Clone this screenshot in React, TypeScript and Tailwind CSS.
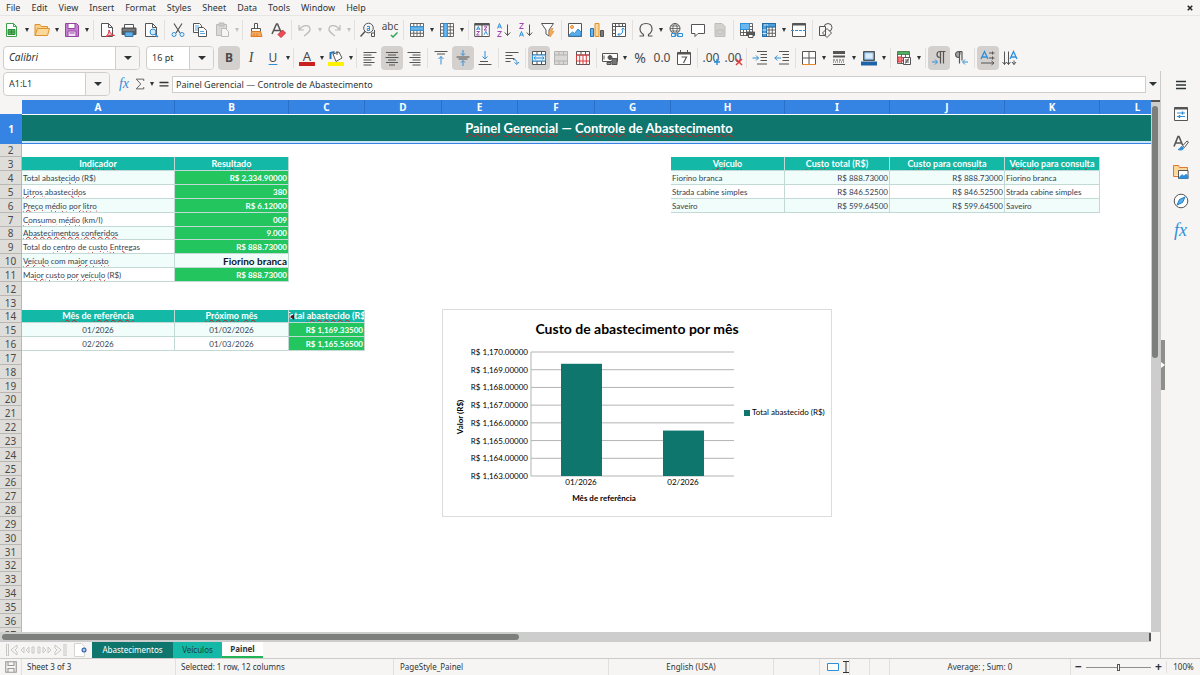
import { ReactNode, useState } from "react";
import clsx from "clsx";

const DARK = "#555555";
const BLUE = "#2f8fd8";

/* ---------- icons ---------- */

interface IconProps {
  children: ReactNode,
  size?: string
}

const Icon: React.FC<IconProps> = ({ children, size = "size-4" }) => (
  <svg className={clsx(size, "shrink-0")} viewBox="0 0 16 16" fill="none" stroke={DARK} strokeWidth="1" aria-hidden="true">
    {children}
  </svg>
)

const Caret: React.FC<{ muted?: boolean, big?: boolean }> = ({ muted, big }) => (
  <svg className={big ? "w-2 h-1" : "w-1 h-1"} viewBox="0 0 8 5" preserveAspectRatio="none" fill={muted ? "#c4c2c0" : "#2e3436"} aria-hidden="true">
    <path d="M0 0h8L4 5z" />
  </svg>
)

const grid = (x: number, y: number, w: number, h: number, cols: number, rows: number) => {
  let d = `M${x} ${y}h${w}v${h}h${-w}z`;
  for (let i = 1; i < cols; i++) d += `M${x + (w * i) / cols} ${y}v${h}`;
  for (let i = 1; i < rows; i++) d += `M${x} ${y + (h * i) / rows}h${w}`;
  return d;
}

const page = "M2.5 1.5h7l4 4v9h-11z M9.5 1.5v4h4";

const icons: Record<string, ReactNode> = {
  new: <><path d="M2.5 1.5h7l3 3v10h-10z M9.5 1.5v3h3" fill="#fff" stroke="#3fa14c" /><path d="M4 7.5h7v5h-7z M4 10h7 M7.5 7.5v5" fill="#56b45f" stroke="#2f8a3d" /></>,
  open: <><path d="M1 13.5V2.5h5l1.5 2h6v2" fill="#f7cf86" stroke="#e0912f" /><path d="M1 13.5l2.5-7h12l-2 7z" fill="#fbd79a" stroke="#e0912f" /></>,
  save: <><path d="M1.5 1.5h11l2 2v11h-13z" fill="#c77fd2" stroke="#94469f" /><path d="M4 1.5h7v5H4z" fill="#fff" stroke="#94469f" /><path d="M4 9h8v5.5H4z" fill="#f3dff5" stroke="#94469f" /><path d="M5.5 11h5" stroke="#94469f" /></>,
  pdf: <><path d={page} fill="#fff" /><path d="M7 14.5c2-1.5 3-4 3-6.5 1 3 2.5 5 5.5 5.5-3-.5-6 0-8.5 1z" stroke="#d92f3f" fill="#f6c7cb" /></>,
  print: <><path d="M3.5 6V2.5h9V6" fill="#fff" /><path d="M1 6h14v6.5H1z" fill="#5a5a5a" /><path d="M4 10h8v4.5H4z" fill="#5fb0ec" stroke="#3a6f9a" /><path d="M2 8h12" stroke="#999" /></>,
  preview: <><path d={page} fill="#fff" /><circle cx="10" cy="10" r="3" fill="#cfe7fa" stroke={BLUE} /><path d="M12 12l3 3" stroke={BLUE} strokeWidth="1.5" /></>,
  cut: <><path d="M4 1.5l6 9.5 M12 1.5L6 11" strokeWidth="1.2" /><circle cx="4" cy="12.5" r="2" stroke={BLUE} /><circle cx="12" cy="12.5" r="2" stroke={BLUE} /></>,
  copy: <><path d="M1.5 1.5h6l2 2v7h-8z" fill="#fff" /><path d="M6.5 5.5h5l3 3v6h-8z" fill="#fff" /><path d="M3 4h4 M3 6h3 M3 8h3 M8 9.5h4 M8 11.5h5" stroke={BLUE} strokeWidth=".8" /></>,
  paste: <g stroke="#bdbbb8"><path d="M2.5 2.5h10v11h-10z" fill="#dad8d6" /><path d="M5 1h5v3H5z" fill="#cfcdca" /><path d="M7.5 6.5h4l3 3v5h-7z" fill="#f6f5f4" /></g>,
  brush: <><path d="M6.5 1.5h3v5h-3z" fill="#fff" /><path d="M3.5 6.5h9v3h-9z" fill="#fff" /><path d="M3.5 9.5h9l1.5 5H3z" fill="#f5a95c" stroke="#df7b23" /><path d="M6 11.5v3 M9 11.5v3" stroke="#df7b23" /></>,
  clear: <><path d="M2 12L6.5 2h1L11 10 M4 8.5h6" strokeWidth="1.5" /><path d="M8 12.5l4.5-4.5 3 3L11 15.5z" fill="#ee4b56" stroke="#c92f3a" /></>,
  undo: <path d="M2 3v5h5 M2.5 8C5 3 12 2 13 6.5c.5 3-2 4.5-6 7.5" stroke="#bdbbb8" strokeWidth="1.2" />,
  redo: <path d="M14 3v5H9 M13.5 8C11 3 4 2 3 6.5c-.5 3 2 4.5 6 7.5" stroke="#bdbbb8" strokeWidth="1.2" />,
  find: <><circle cx="8.5" cy="6" r="4.8" /><path d="M5 9.5l-4.5 5" strokeWidth="1.5" /><path d="M7 4.5h2.5v4H7.3v-2h2.2" stroke={BLUE} /><path d="M14.5 8v6.5h-3v-3.5h3" /></>,
  rows: <><path d={grid(1.5, 1.5, 13, 13, 4, 4)} strokeWidth=".9" fill="#fff" /><path d="M1.5 4.8h13v3.5h-13z" fill="#6bb6ee" stroke={BLUE} /></>,
  cols: <><path d={grid(1.5, 1.5, 13, 13, 4, 4)} strokeWidth=".9" fill="#fff" /><path d="M4.8 1.5h3.5v13H4.8z" fill="#6bb6ee" stroke={BLUE} /></>,
  sort: <><path d="M.7 1.5h14.6v13H.7z M8 1.5v13" fill="#fff" /><path d="M.7 2.5h14.6" strokeWidth="2" /><path d="M2.5 8L4.3 4.5 6 8 M3 7h2.5 M10 12.8l1.8-3.5 1.7 3.5" stroke={BLUE} /><path d="M2.5 9.5h3L2.5 13h3 M10 4.8h3L10 8h3" stroke="#a443b5" /></>,
  az: <><path d="M1.5 6.5L3.5 1.5l2 5 M2 5h3" stroke={BLUE} /><path d="M1.5 9.5h4l-4 5h4" stroke="#a443b5" /><path d="M11.5 2.5v11 M8.8 10.5l2.7 3 2.7-3" /></>,
  za: <><path d="M1.5 1.5h4l-4 5h4" stroke="#a443b5" /><path d="M1.5 14.5l2-5 2 5 M2 13h3" stroke={BLUE} /><path d="M11.5 2.5v11 M8.8 10.5l2.7 3 2.7-3" /></>,
  filter: <><path d="M1.5 1.5h12L9 8v6l-3-2V8z" fill="#fff" /><path d="M11.5 6.5L8.5 11h2.5l-1 4 4-5.5h-2.5l1.5-3z" fill="#f9b25c" stroke="#e58a2a" strokeWidth=".7" /></>,
  image: <><path d="M1.5 1.5h13v13h-13z" fill="#fff" /><circle cx="5" cy="5" r="1.5" fill="#f9c98c" stroke="#e58a2a" /><path d="M2 13l3.5-3 2 1.5L11 7l3 3v4H2z" fill="#5aaeea" stroke={BLUE} /></>,
  chart: <><path d="M1.5 6.5h3v8h-3z" fill="#6bb6ee" stroke="#2475b5" /><path d="M6 1.5h4v13H6z" fill="#fbd79a" stroke="#e0912f" /><path d="M11.5 8.5h3v6h-3z" fill="#7a7a7a" /></>,
  pivot: <><path d="M1.5 1.5h13v13h-13z M1.5 4.5h13 M4.5 1.5v13 M8 1.5v3 M11.5 1.5v3 M1.5 8h3 M1.5 11.5h3" fill="#fff" /><path d="M12 6l-.5 4c-.5 2-2 2.5-4.5 2.5 M10.5 7.5L12 6l1.5 1.5 M8.5 11L7 12.5l1.5 1.5" stroke={BLUE} /></>,
  omega: <path d="M1.5 14h4v-1.5C3 11 2 9 2 7c0-3.5 2.5-5.5 6-5.5s6 2 6 5.5c0 2-1 4-3.5 5.5V14h4" strokeWidth="1.2" />,
  link: <><circle cx="7" cy="6.5" r="5" /><path d="M2 6.5h10 M7 1.5c-3 3-3 7 0 10 M7 1.5c3 3 3 7 0 10 M3 4h8 M3 9h8" strokeWidth=".8" /><path d="M3.5 11.5h4v3h-4z M9.5 11.5h5v3h-5z M6 13h5" stroke={BLUE} fill="#e9f4fc" /></>,
  comment: <path d="M1.5 2.5h13v9H8L5 14.5v-3H1.5z" fill="#fff" />,
  headfoot: <path d="M3 1.5h7l3 3v10H3z M5 8h6v4H5z" fill="#d3d1ce" stroke="#bfbdba" />,
  printarea: <><path d={grid(1.5, 1.5, 12, 12, 4, 4)} strokeWidth=".9" fill="#fff" /><path d="M1.5 1.5h9v6h-9z" fill="#6bb6ee" stroke={BLUE} /><path d="M8 10h7.5v3.5H8z" fill="#5a5a5a" /><path d="M9.5 12.5h4.5v3H9.5z" fill="#fff" /></>,
  freeze: <><path d={grid(1.5, 1.5, 13, 13, 4, 4)} strokeWidth=".9" fill="#fff" /><path d="M1.5 1.5h4v13h-4z M5.5 1.5h9v3.5h-9z" fill="#4b9fdc" stroke="#1f6ba8" /><path d="M1.5 8h4 M1.5 11.5h4 M3 3h4" stroke="#fff" strokeWidth=".8" /></>,
  split: <><path d="M1.5 1.5h13v13h-13z" fill="#fff" /><path d="M1.5 2.5h13" strokeWidth="2" /><path d="M0 8.5h16" stroke={BLUE} strokeDasharray="3 1" /></>,
  shapes: <><circle cx="10" cy="5.5" r="4" /><path d="M1.5 4.5h6v9h-6z M9 6.5l4.5 4.5L9 15.5 4.5 11z" fill="#f6f5f4" /></>,
  left: <path d="M1.5 2.5h13 M1.5 5h8 M1.5 7.5h11 M1.5 10h8 M1.5 12.5h11 M1.5 15h8" />,
  center: <path d="M2 2.5h12 M4 5h8 M1.5 7.5h13 M4 10h8 M2 12.5h12 M5 15h6" />,
  right: <path d="M1.5 2.5h13 M6.5 5h8 M3.5 7.5h11 M6.5 10h8 M3.5 12.5h11 M6.5 15h8" />,
  top: <><path d="M1.5 1.5h13 M4 4h8" /><path d="M8 14.5V6.5 M5.5 9L8 6.5 10.5 9" stroke={BLUE} /></>,
  middle: <><path d="M1.5 7h13 M3.5 9h9" /><path d="M8 0v5 M6 3.5L8 5.5l2-2 M8 16v-5 M6 12.5l2-2 2 2" stroke={BLUE} /></>,
  bottom: <><path d="M1.5 14.5h13 M3 11.5h8" /><path d="M8 1v8 M5.5 6.5L8 9l2.5-2.5" stroke={BLUE} /></>,
  wrap: <><path d="M1.5 2.5h13 M1.5 5.5h7 M1.5 8.5h9 M1.5 11.5h5" /><path d="M9 9.5c3 0 4 1 4 4 M10.5 12.5l2.5 2 2-2.5" stroke={BLUE} /></>,
  merge: <><path d="M1.5 1.5h13v13h-13z M1.5 5h13 M1.5 11h13 M6 1.5V5 M10.5 1.5V5 M6 11v3.5 M10.5 11v3.5" fill="#fff" /><path d="M1.5 5h13v6h-13z M4 8h8" stroke={BLUE} fill="#dff0fc" /><path d="M4.5 6.5L3 8l1.5 1.5 M11.5 6.5L13 8l-1.5 1.5" stroke={BLUE} /></>,
  mergeOff: <path d="M1.5 1.5h13v13h-13z M1.5 5h13 M1.5 11h13 M6 1.5V5 M10.5 1.5V5 M6 11v3.5 M10.5 11v3.5" fill="#dad8d6" stroke="#b5b3b0" />,
  unmerge: <><path d="M1.5 1.5h13v13h-13z M1.5 5h13 M6 1.5V5 M10.5 1.5V5" fill="#fff" /><path d="M1.5 5h13v6h-13z M4.7 5v9.5 M8 5v9.5 M11.3 5v9.5" stroke="#d93a3a" /></>,
  currency: <><path d="M.5 3.5h15v8H.5z" fill="#fff" /><circle cx="8" cy="7.5" r="2" fill={DARK} /><path d="M2 5.5v4" /><path d="M10 8.5h5v6h-5z" fill="#777" /><path d="M5 12.5h4v2H5z" fill="#999" /></>,
  date: <><path d="M1.5 2.5h13v12h-13z" fill="#fff" /><path d="M1.5 3.5h13" strokeWidth="2" /><path d="M4.5 0v2 M11.5 0v2" /><path d="M5.5 7h5L7.5 13" strokeWidth="1.2" /></>,
  indent: <><path d="M5 1.5h10 M8.5 4.5h6.5 M8.5 7.5h6.5 M8.5 10.5h6.5 M5 14h10" /><path d="M.5 8h6 M4 5.5L6.5 8 4 10.5" stroke={BLUE} /></>,
  outdent: <><path d="M5 1.5h10 M8.5 4.5h6.5 M8.5 7.5h6.5 M8.5 10.5h6.5 M5 14h10" /><path d="M7 8H.8 M3.3 5.5L.8 8l2.5 2.5" stroke={BLUE} /></>,
  borders: <><path d="M1.5 14.5v-13h13v13 M8 1.5v13 M1.5 8h13" fill="#fff" /><path d="M1 14.5h14" stroke="#e58a2a" /></>,
  borderStyle: <><path d="M2 2.5h12" strokeWidth="3" /><path d="M2 6.5h12" strokeWidth="2" /><path d="M2 10h12" strokeDasharray="2 1" /><path d="M2 12h12" strokeDasharray="1 1" /><path d="M2 14.5h12" /></>,
  borderColor: <><path d="M2.5 1.5h11v9h-11z" fill="#5a7d9a" /><path d="M4 3h8v6H4z" fill="#dcebf8" stroke="#9cc9ec" /><path d="M0 13.5h16" stroke="#1d63a8" strokeWidth="4" /></>,
  conditional: <><path d={grid(1.5, 1.5, 12, 12, 3, 4)} fill="#fff" strokeWidth=".9" /><path d="M2 2h11v2H2z" fill="#62bd6d" stroke="#3fa14c" /><path d="M2 7h4v5H2z" fill="#f27d82" stroke="#d93a3a" /><path d="M7.5 7.5h7v7h-7z M9 10h4 M9 12h4 M12.5 8.5l-3 5" fill="#fff" /></>,
  ltr: <><path d="M14.5 1.5H9c-4 0-4 6 0 6 M9.5 1.5v12 M12.5 1.5v12" strokeWidth="1.2" /><path d="M1 12h5 M4 9.5L6.5 12 4 14.5" stroke={BLUE} /></>,
  rtl: <><path d="M9 1.5H6c-4.5 0-4.5 6 0 6 M6.5 1.5v12 M9 1.5v9" fill="#a9a7a5" strokeWidth="1.2" /><path d="M15 12h-5 M12 9.5L9.5 12l2.5 2.5" stroke={BLUE} /></>,
  horizText: <><path d="M1 9L4.5 1.5 8 9 M2 7h5" stroke={BLUE} strokeWidth="1.3" /><path d="M9 3h5.5 M12.5 1.5v3 M9 8h5.5 M12.5 6.5v3 M1 13h13 M11.5 11l2.5 2-2.5 2" /></>,
  vertText: <><path d="M8 9l3.5-7.5L15 9 M9 7h5" stroke={BLUE} strokeWidth="1.3" /><path d="M2.5 1.5v13 M.5 12l2 2.5 2-2.5 M6.5 1.5v13 M4.5 12l2 2.5 2-2.5 M12 10.5v4 M10 12l2 2.5 2-2.5" /></>,
  properties: <><path d="M1.5 1.5h13v13h-13z" fill="#fff" /><path d="M1.5 2.5h13" strokeWidth="2" /><path d="M4 7h8 M4 10.5h8" stroke={BLUE} /><path d="M9.5 5.5v3 M6.5 9v3" stroke={BLUE} strokeWidth="1.5" /></>,
  styles: <><path d="M1 11.5L5 1.5h1L9.5 10 M3 8h5" strokeWidth="1.6" /><path d="M9.5 11L14 6l1.5 1-4 5.5z" fill="#fff" /><path d="M5 14.5c2 0 2-2.5 4-3l1.5 1.5c0 2-3 2.5-5.5 1.5z" fill={BLUE} stroke={BLUE} /></>,
  gallery: <><path d="M.5 12.5v-11h5l1 2h8v3" fill="#fbd79a" stroke="#e0782f" /><path d="M.5 12.5h5v-6h9" stroke="#e0782f" /><path d="M5.5 6.5h9.5v8H5.5z" fill="#fff" /><path d="M6 13.5l3-3 2 1.5 2-2 2 2v2.5H6z" fill={BLUE} stroke={BLUE} strokeWidth=".6" /></>,
  navigator: <><circle cx="8" cy="8" r="6.8" fill="#fff" /><path d="M12 4L9.5 9.5 4 12l2.5-5.5z" fill="#5aaeea" stroke="#1f7cc4" /></>,
  burger: <path d="M3 4.5h10 M3 8h10 M3 11.5h10" stroke="#2e3436" strokeWidth="1.5" />,
  sigma: <path d="M13 4V1.5H3L9 8l-6 6.5h10V12" strokeWidth="1.2" />,
  equals: <path d="M2 6h12 M2 10.5h12" stroke="#333" strokeWidth="1.8" />,
  close: <path d="M5 5l6 6 M11 5l-6 6" stroke="#222" strokeWidth="2" />,
}

const textIcons: Record<string, ReactNode> = {
  spell: (
    <span className="relative h-5 font-['Noto_Sans'] text-[10px] leading-3">
      abc
      <svg className="absolute top-3 right-0 w-2 h-1.5" viewBox="0 0 8 6" fill="none" stroke="#2fa85f" strokeWidth="1.5"><path d="M1 3l2 2 4.5-4.5" /></svg>
    </span>
  ),
  bold: <span className="font-['Noto_Sans'] font-bold text-xs">B</span>,
  italic: <span className="font-['Liberation_Serif'] italic text-sm">I</span>,
  underline: <span className="font-['Noto_Sans'] text-xs underline decoration-[#2f8fd8] underline-offset-2">U</span>,
  fontColor: <span className="font-['Noto_Sans'] text-[13px] leading-3 border-b-4 border-[#c9211e] w-4 text-center">A</span>,
  fill: (
    <svg className="size-4" viewBox="0 0 16 16" fill="none" stroke={DARK} aria-hidden="true">
      <path d="M5 4l6-2 3 6-6 3.5z" fill="#fff" /><path d="M9 1v4" /><path d="M2.5 9V3l4-1" stroke="#2475b5" strokeWidth="2" /><path d="M0 14h16" stroke="#fff200" strokeWidth="4" />
    </svg>
  ),
  percent: <span className="font-['Noto_Sans'] text-sm">%</span>,
  number: <span className="font-['Noto_Sans'] text-xs">0.0</span>,
  addDec: (
    <span className="relative font-['Noto_Sans'] text-xs">.00
      <svg className="absolute bottom-0 -right-0.5 size-2" viewBox="0 0 8 8" stroke={BLUE} strokeWidth="1.5"><path d="M4 1v6 M1 4h6" /></svg>
    </span>
  ),
  delDec: (
    <span className="relative font-['Noto_Sans'] text-xs">.00
      <svg className="absolute bottom-0 -right-0.5 size-2" viewBox="0 0 8 8" stroke="#e03b3b" strokeWidth="1.5"><path d="M1 1l6 6 M7 1l-6 6" /></svg>
    </span>
  ),
}

/* ---------- toolbars ---------- */

interface ToolItem {
  id: string,
  label: string,
  menu?: boolean,
  active?: boolean,
  disabled?: boolean
}

const standardGroups: ToolItem[][] = [
  [{ id: "new", label: "New", menu: true }, { id: "open", label: "Open", menu: true }, { id: "save", label: "Save", menu: true }],
  [{ id: "pdf", label: "Export as PDF" }, { id: "print", label: "Print" }, { id: "preview", label: "Print Preview" }],
  [{ id: "cut", label: "Cut" }, { id: "copy", label: "Copy" }, { id: "paste", label: "Paste", menu: true, disabled: true }],
  [{ id: "brush", label: "Clone Formatting" }, { id: "clear", label: "Clear Formatting" }],
  [{ id: "undo", label: "Undo", menu: true, disabled: true }, { id: "redo", label: "Redo", menu: true, disabled: true }],
  [{ id: "find", label: "Find and Replace" }, { id: "spell", label: "Spelling" }],
  [{ id: "rows", label: "Row", menu: true }, { id: "cols", label: "Column", menu: true }],
  [{ id: "sort", label: "Sort" }, { id: "az", label: "Sort Ascending" }, { id: "za", label: "Sort Descending" }, { id: "filter", label: "AutoFilter" }],
  [{ id: "image", label: "Insert Image" }, { id: "chart", label: "Insert Chart" }, { id: "pivot", label: "Pivot Table" }],
  [{ id: "omega", label: "Special Character", menu: true }, { id: "link", label: "Hyperlink" }, { id: "comment", label: "Comment" }, { id: "headfoot", label: "Headers and Footers", disabled: true }],
  [{ id: "printarea", label: "Define Print Area" }, { id: "freeze", label: "Freeze Rows and Columns", menu: true }, { id: "split", label: "Split Window" }],
  [{ id: "shapes", label: "Show Draw Functions" }],
]

const charGroups: ToolItem[][] = [
  [{ id: "bold", label: "Bold", active: true }, { id: "italic", label: "Italic" }, { id: "underline", label: "Underline", menu: true }],
  [{ id: "fontColor", label: "Font Color", menu: true }, { id: "fill", label: "Background Color", menu: true }],
]

const cellGroups: ToolItem[][] = [
  [{ id: "left", label: "Align Left" }, { id: "center", label: "Center Horizontally", active: true }, { id: "right", label: "Align Right" }],
  [{ id: "top", label: "Align Top" }, { id: "middle", label: "Center Vertically", active: true }, { id: "bottom", label: "Align Bottom" }],
  [{ id: "wrap", label: "Wrap Text" }],
  [{ id: "merge", label: "Merge and Center Cells", active: true }, { id: "mergeOff", label: "Merge Cells", disabled: true }, { id: "unmerge", label: "Unmerge Cells" }],
  [{ id: "currency", label: "Format as Currency", menu: true }, { id: "percent", label: "Format as Percent" }, { id: "number", label: "Format as Number" }, { id: "date", label: "Format as Date" }],
  [{ id: "addDec", label: "Add Decimal Place" }, { id: "delDec", label: "Delete Decimal Place" }],
  [{ id: "indent", label: "Increase Indent" }, { id: "outdent", label: "Decrease Indent" }],
  [{ id: "borders", label: "Borders", menu: true }, { id: "borderStyle", label: "Border Style", menu: true }, { id: "borderColor", label: "Border Color", menu: true }],
  [{ id: "conditional", label: "Conditional Formatting", menu: true }],
  [{ id: "ltr", label: "Left-To-Right", active: true }, { id: "rtl", label: "Right-To-Left" }],
  [{ id: "horizText", label: "Text direction from left to right", active: true }, { id: "vertText", label: "Text direction from top to bottom" }],
]

const Separator = () => <div className="w-px h-5 mx-0.5 shrink-0 bg-[#e2e0de]" />

const ToolGroups: React.FC<{ groups: ToolItem[][], compact?: boolean }> = ({ groups, compact }) => (
  <>
    {groups.map((group, i) => (
      <div key={i} className="flex items-center shrink-0">
        {i > 0 && <Separator />}
        {group.map((item) => (
          <div key={item.id} className="flex items-center">
            <button
              type="button"
              title={item.label}
              aria-label={item.label}
              disabled={item.disabled}
              className={clsx("flex items-center justify-center w-[22px] h-6 rounded text-[#4a4a4a]", item.active && "bg-[#d3d0cd]")}
            >
              {textIcons[item.id] ?? <Icon>{icons[item.id]}</Icon>}
            </button>
            {item.menu && (
              <button type="button" aria-label={item.label + " options"} className={clsx("flex items-center justify-center h-6", compact || item.disabled ? "w-[7px]" : "w-2")}>
                <Caret muted={item.disabled} />
              </button>
            )}
          </div>
        ))}
      </div>
    ))}
  </>
)

interface ComboProps {
  label: string,
  value: string,
  className: string,
  inputClass?: string
}

const Combo: React.FC<ComboProps> = ({ label, value, className, inputClass }) => {
  const [text, setText] = useState(value);
  return (
    <div className={clsx("flex h-6 shrink-0 border border-[#d0cdca] rounded bg-white overflow-hidden", className)}>
      <input aria-label={label} value={text} onChange={(e) => setText(e.target.value)} className={clsx("flex-1 min-w-0 px-[5px] outline-none text-[#2e3436]", inputClass)} />
      <button type="button" aria-label={label + " list"} className="flex items-center justify-center w-6 border-l border-[#d0cdca] bg-[#f6f5f4]">
        <Caret big />
      </button>
    </div>
  )
}

/* ---------- sheet ---------- */

type Kind = "head" | "text" | "center" | "value" | "plain" | "strong";

interface Cell {
  text: string,
  kind: Kind,
  tint?: boolean,
  cut?: boolean
}

const kindClass: Record<Kind, string> = {
  head: "bg-[#14b8a6] text-white font-bold text-center text-[9px]",
  text: "text-[#374151] text-left text-[8px]",
  center: "text-[#374151] text-center text-[8px]",
  value: "bg-[#22c55e] text-white font-bold text-right text-[8px]",
  plain: "text-[#374151] text-right text-[8px]",
  strong: "text-[#0f172a] font-bold text-right text-[10px]",
}

const columns = ["A", "B", "C", "D", "E", "F", "G", "H", "I", "J", "K", "L"];
const columnClass = ["w-[153px]", "w-[114px]", "w-[76px]", "w-[77px]", "w-[76px]", "w-[77px]", "w-[76px]", "w-[114px]", "w-[105px]", "w-[115px]", "w-[95px]", "w-[76px]"];

const cells: Record<string, Cell> = {
  C14: { text: "Total abastecido (R$)", kind: "head", cut: true },
}

const put = (row: number, names: string, kinds: Kind[], values: string[], tint = false) => {
  names.split("").forEach((name, i) => {
    cells[name + row] = { text: values[i], kind: kinds[i], tint };
  });
}

put(3, "AB", ["head", "head"], ["Indicador", "Resultado"]);
put(4, "AB", ["text", "value"], ["Total abastecido (R$)", "R$ 2,334.90000"], true);
put(5, "AB", ["text", "value"], ["Litros abastecidos", "380"]);
put(6, "AB", ["text", "value"], ["Preço médio por litro", "R$ 6.12000"], true);
put(7, "AB", ["text", "value"], ["Consumo médio (km/l)", "009"]);
put(8, "AB", ["text", "value"], ["Abastecimentos conferidos", "9.000"], true);
put(9, "AB", ["text", "value"], ["Total do centro de custo Entregas", "R$ 888.73000"]);
put(10, "AB", ["text", "strong"], ["Veículo com maior custo", "Fiorino branca"], true);
put(11, "AB", ["text", "value"], ["Maior custo por veículo (R$)", "R$ 888.73000"]);
put(14, "AB", ["head", "head"], ["Mês de referência", "Próximo mês"]);
put(15, "ABC", ["center", "center", "value"], ["01/2026", "01/02/2026", "R$ 1,169.33500"], true);
put(16, "ABC", ["center", "center", "value"], ["02/2026", "01/03/2026", "R$ 1,165.56500"]);
put(3, "HIJK", ["head", "head", "head", "head"], ["Veículo", "Custo total (R$)", "Custo para consulta", "Veículo para consulta"]);
put(4, "HIJK", ["text", "plain", "plain", "text"], ["Fiorino branca", "R$ 888.73000", "R$ 888.73000", "Fiorino branca"], true);
put(5, "HIJK", ["text", "plain", "plain", "text"], ["Strada cabine simples", "R$ 846.52500", "R$ 846.52500", "Strada cabine simples"]);
put(6, "HIJK", ["text", "plain", "plain", "text"], ["Saveiro", "R$ 599.64500", "R$ 599.64500", "Saveiro"], true);

// words the spell checker accepts
const known = ["Total", "total", "com", "para", "Fiorino", "branca", "Strada", "cabine", "simples", "Saveiro"];

const Spelled: React.FC<{ text: string }> = ({ text }) => (
  <>
    {text.split(" ").map((word, i) => {
      const ok = known.includes(word) || !/^[A-Za-zÀ-ú]{3,}$/.test(word);
      return (
        <span key={i}>
          {i > 0 && " "}
          <span className={ok ? "" : "underline decoration-wavy decoration-[#d01f1f] decoration-1 underline-offset-0"}>{word}</span>
        </span>
      )
    })}
  </>
)

const SheetCell: React.FC<{ cell?: Cell }> = ({ cell }) => {
  if (!cell) return <td />;
  return (
    <td className={clsx("px-px py-0 border-r border-b border-[#c3d9d5] leading-3 whitespace-nowrap overflow-hidden", kindClass[cell.kind], cell.tint && cell.kind !== "value" && "bg-[#f0fdfa]")}>
      {cell.cut ? (
        <div className="relative flex justify-center h-3">
          <span><Spelled text={cell.text} /></span>
          <svg className="absolute left-0 top-1 w-1 h-1.5" viewBox="0 0 4 6" fill="#5b1020"><path d="M4 0v6L0 3z" /></svg>
        </div>
      ) : (
        <div className="h-3"><Spelled text={cell.text} /></div>
      )}
    </td>
  )
}

const rows = Array.from({ length: 36 }, (_, i) => i + 2);

const Sheet = () => (
  <table className="w-full min-w-[1176px] table-fixed border-separate border-spacing-0 font-[Lato,sans-serif]">
    <colgroup>
      <col className="w-[22px]" />
      {columnClass.map((c, i) => <col key={i} className={c} />)}
      <col />
    </colgroup>
    <thead>
      <tr className="h-[14px] font-['Noto_Sans'] text-[10px] leading-3 text-white">
        <td className="p-0 bg-[#f6f5f4]" />
        {columns.map((c) => <th key={c} scope="col" className="p-0 bg-[#3584e4] border-r border-[#2a6fc6] font-bold">{c}</th>)}
        <td className="p-0 bg-[#3584e4]" />
      </tr>
    </thead>
    <tbody>
      <tr className="h-[30px]">
        <th scope="row" className="p-0 bg-[#3584e4] text-white font-['Noto_Sans'] text-[10px] font-bold">1</th>
        <td colSpan={12} className="p-0 pb-0.5 bg-[#0f766e] text-white text-center font-bold text-[13px] leading-5 border-t border-t-white border-b border-b-[#3584e4] shadow-[inset_0_-2px_0_#c9e4f7]">
          <Spelled text="Painel Gerencial — Controle de Abastecimento" />
        </td>
        <td className="p-0" />
      </tr>
      {rows.map((row) => (
        <tr key={row} className={row % 6 === 2 ? "h-[13px]" : "h-[14px]"}>
          <th scope="row" className="p-0 bg-[#deddda] border-r border-b border-[#b9b7b4] font-['Noto_Sans'] text-[10px] leading-3 font-normal text-[#4a4a4a]">{row}</th>
          {columns.map((c) => <SheetCell key={c} cell={cells[c + row]} />)}
          <td />
        </tr>
      ))}
    </tbody>
  </table>
)

/* ---------- chart ---------- */

const months = [
  { label: "01/2026", total: 1169.335 },
  { label: "02/2026", total: 1165.565 },
]
const ticks = [1170, 1169, 1168, 1167, 1166, 1165, 1164, 1163];

const CostChart = () => {
  const yOf = (v: number) => 42 + ((1170 - v) / 7) * 124;
  return (
    <svg className="absolute left-[442px] top-[209px] w-[390px] h-[208px] bg-white border border-[#dcdcdc] font-[Lato,sans-serif]" viewBox="0 0 388 206" role="img" aria-label="Custo de abastecimento por mês">
      <text x="194" y="24" textAnchor="middle" fontSize="14" fontWeight="700">Custo de abastecimento por mês</text>
      {ticks.map((t) => (
        <g key={t}>
          <path d={`M88 ${yOf(t)}H291`} stroke="#b3b3b3" />
          <text x="85" y={yOf(t) + 3} textAnchor="end" fontSize="8">R$ {t.toLocaleString("en-US")}.00000</text>
        </g>
      ))}
      <path d="M88 42v124" stroke="#b3b3b3" />
      {months.map((m, i) => (
        <g key={m.label}>
          <rect x={118 + i * 102} y={yOf(m.total)} width="41" height={yOf(1163) - yOf(m.total)} fill="#0f766e" />
          <text x={138 + i * 102} y="175" textAnchor="middle" fontSize="8">{m.label}</text>
        </g>
      ))}
      <text x="161" y="191" textAnchor="middle" fontSize="8" fontWeight="700">Mês de referência</text>
      <text transform="translate(20 107) rotate(-90)" textAnchor="middle" fontSize="8" fontWeight="700">Valor (R$)</text>
      <rect x="301" y="100" width="6" height="6" fill="#0f766e" />
      <text x="309" y="105" fontSize="8">Total abastecido (R$)</text>
    </svg>
  )
}

/* ---------- page ---------- */

const menus = ["File", "Edit", "View", "Insert", "Format", "Styles", "Sheet", "Data", "Tools", "Window", "Help"];

const sideIcons = ["burger", "properties", "styles", "gallery", "navigator"];

const StatusField: React.FC<{ className: string, children?: ReactNode }> = ({ className, children }) => (
  <div className={clsx("flex items-center h-4 border-r border-[#e2e0de]", className)}>{children}</div>
)

const App = () => {
  const [formula, setFormula] = useState("Painel Gerencial — Controle de Abastecimento");
  const [zoom, setZoom] = useState(50);

  return (
    <div className="flex flex-col h-screen overflow-hidden bg-[#f6f5f4] text-[#2e3436] font-['Noto_Sans',sans-serif] text-[9px]">
      <nav className="flex items-center gap-px h-4 shrink-0 pl-px border-b border-[#e8e6e4]" aria-label="Main menu">
        {menus.map((m) => <button key={m} type="button" className="px-[5px]">{m}</button>)}
        <button type="button" aria-label="Close document" className="ml-auto mr-1"><Icon size="size-3">{icons.close}</Icon></button>
      </nav>

      <div className="flex items-center h-7 shrink-0 pl-px">
        <ToolGroups groups={standardGroups} />
      </div>
      <div className="flex items-center h-[27px] shrink-0 pl-[3px]">
        <Combo label="Font Name" value="Calibri" className="w-[137px]" inputClass="italic text-[10px]" />
        <Combo label="Font Size" value="16 pt" className="w-[68px] ml-1.5" />
        <div className="w-1 shrink-0" />
        <ToolGroups groups={charGroups} compact />
        <Separator />
        <ToolGroups groups={cellGroups} />
      </div>

      <div className="flex flex-1 min-h-0 border-b border-[#cdcbc8]">
        <div className="flex flex-col flex-1 min-w-0">
          <div className="flex items-center h-[29px] shrink-0 pl-[3px] pb-[3px]">
            <Combo label="Name Box" value="A1:L1" className="w-[107px]" />
            <button type="button" aria-label="Function Wizard" className="ml-2 w-3 font-['Liberation_Serif'] italic text-sm leading-4 text-[#2f8fd8]">fx</button>
            <button type="button" aria-label="Select Function" className="flex items-center gap-1 ml-1"><Icon size="size-3">{icons.sigma}</Icon><Caret /></button>
            <button type="button" aria-label="Formula" className="ml-1"><Icon size="size-3">{icons.equals}</Icon></button>
            <input aria-label="Formula input" value={formula} onChange={(e) => setFormula(e.target.value)} className="flex-1 min-w-0 h-[17px] ml-0.5 px-[3px] bg-white border border-[#d0cdca] outline-none" />
            <button type="button" aria-label="Expand Formula Bar" className="flex items-center justify-center w-[14px] h-4"><Caret big /></button>
          </div>

          <div className="flex flex-1 min-h-0">
            <div className="relative flex-1 min-w-0 bg-white overflow-hidden">
              <Sheet />
              <CostChart />
            </div>
            <div className="w-[9px] shrink-0 bg-[#cdcdcd] px-px pt-1 border-t-2 border-[#555]">
              <div className="w-1.5 h-[48%] rounded-full bg-[#7d7f7d]" />
            </div>
          </div>
          <div className="flex h-2.5 shrink-0">
            <div className="flex flex-1 items-center bg-[#cdcdcd] pl-0.5">
              <div className="w-[45%] h-1.5 rounded-full bg-[#7d7f7d]" />
              <div className="ml-auto w-0.5 h-2 bg-[#555]" />
            </div>
            <div className="w-[9px]" />
          </div>

          <div className="flex h-4 shrink-0 text-[8px]">
            <div className="flex items-center w-[92px] shrink-0 pl-1.5">
              <svg className="w-[61px] h-3 shrink-0" viewBox="0 0 61 12" fill="none" stroke="#c9c7c4" aria-hidden="true">
                <path d="M.5 0v12h2V0z M11 1L5 6l6 5V8L9 6l2-2z M18 3l-3 3 3 3z M23 3l-3 3 3 3z M26 3v6h2V3z M32 3v6h2V3z M37 3l3 3-3 3z M42 3l3 3-3 3z M49 1l6 5-6 5V8l2-2-2-2z M58 0v12h2V0z" />
              </svg>
              <button type="button" aria-label="Add Sheet" className="ml-1.5">
                <svg className="size-3.5" viewBox="0 0 14 14" fill="#fff" stroke="#d6d4d2"><path d="M1.5.5h7l3 3v10h-10z" /><circle cx="11" cy="7" r="2.5" fill="#2a5caa" stroke="none" /><path d="M11 5.5v3 M9.500 7h3" stroke="#fff" strokeWidth=".8" /></svg>
              </button>
            </div>
            <button type="button" className="w-[81px] bg-[#0f766e] text-white">Abastecimentos</button>
            <button type="button" className="w-[49px] bg-[#14b8a6] text-[#1c3f3b]">Veículos</button>
            <button type="button" className="w-[41px] bg-white font-bold border-b-2 border-[#22b455]">Painel</button>
          </div>
        </div>

        <aside className="flex w-10 shrink-0 border-l border-[#cdcbc8]">
          <div className="flex flex-col w-1 justify-center">
            <button type="button" aria-label="Hide sidebar" className="flex items-center h-[50px] bg-[#8e8e8c]">
              <svg className="w-1 h-1.5" viewBox="0 0 4 6" fill="#fff"><path d="M0 0l4 3-4 3z" /></svg>
            </button>
          </div>
          <div className="flex flex-col items-center flex-1 gap-[13px] pt-1.5 pr-1">
            {sideIcons.map((name) => (
              <button key={name} type="button" aria-label={name}><Icon>{icons[name]}</Icon></button>
            ))}
            <button type="button" aria-label="Functions" className="font-['Liberation_Serif'] italic text-lg leading-4 text-[#2f8fd8]">fx</button>
          </div>
        </aside>
      </div>

      <footer className="flex items-center h-4 shrink-0 text-[8px] text-[#2e3436]">
        <StatusField className="w-[22px] justify-center">
          <svg className="size-3" viewBox="0 0 16 16" fill="none" stroke="#9a9896" strokeWidth="1.5"><path d="M1 1h14v14H1z M4 1v5h8V1 M4 15v-5h8v5" /></svg>
        </StatusField>
        <StatusField className="w-[154px] pl-[5px]">Sheet 3 of 3</StatusField>
        <StatusField className="w-[218px] pl-[5px]">Selected: 1 row, 12 columns</StatusField>
        <StatusField className="w-[215px] pl-1.5">PageStyle_Painel</StatusField>
        <StatusField className="flex-1 justify-center">English (USA)</StatusField>
        <StatusField className="w-[46px]" />
        <StatusField className="w-[30px] gap-1 pl-[7px]">
          <svg className="w-3 h-2" viewBox="0 0 12 8" fill="#fff" stroke={BLUE}><path d="M.5.5h11v7H.5z" /></svg>
          <svg className="w-1.5 h-3" viewBox="0 0 6 12" fill="none" stroke="#333"><path d="M0 .5h6 M3 .5v11 M0 11.5h6" /></svg>
        </StatusField>
        <StatusField className="w-5" />
        <StatusField className="w-5" />
        <StatusField className="w-[181px] justify-center">Average: ; Sum: 0</StatusField>
        <div className="flex items-center w-[95px] justify-center gap-1">
          <button type="button" aria-label="Zoom Out" className="text-xs leading-3 font-bold">−</button>
          <input
            type="range"
            aria-label="Zoom"
            value={zoom}
            onChange={(e) => setZoom(Number(e.target.value))}
            className="w-[65px] h-2 appearance-none bg-transparent [&::-webkit-slider-runnable-track]:h-px [&::-webkit-slider-runnable-track]:bg-[#8e8e8c] [&::-webkit-slider-thumb]:appearance-none [&::-webkit-slider-thumb]:w-[3px] [&::-webkit-slider-thumb]:h-[7px] [&::-webkit-slider-thumb]:-mt-[3px] [&::-webkit-slider-thumb]:border [&::-webkit-slider-thumb]:border-[#555] [&::-webkit-slider-thumb]:bg-white"
          />
          <button type="button" aria-label="Zoom In" className="text-xs leading-3 font-bold">+</button>
        </div>
        <div className="w-[34px] text-center border-l border-[#e2e0de]">100%</div>
      </footer>
    </div>
  )
}

export default App;
